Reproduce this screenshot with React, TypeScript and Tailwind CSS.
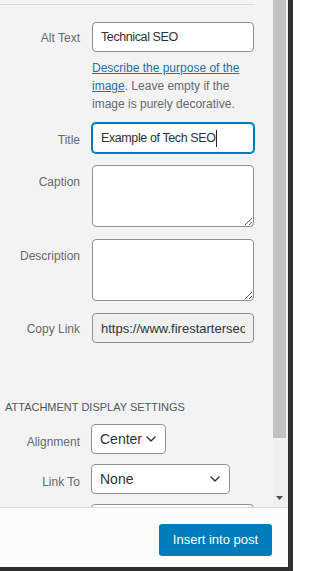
import React from "react"

const font = { fontFamily: '"Liberation Sans", Arial, sans-serif' }

function Label({ children, top = "pt-[7px]" }: { children: React.ReactNode; top?: string }) {
  return (
    <div className={`w-[80px] shrink-0 text-right text-[12px] leading-[18px] text-[#646970] ${top}`}>
      {children}
    </div>
  )
}

function Chevron() {
  return (
    <svg width="10" height="6" viewBox="0 0 10 6" fill="none" className="shrink-0">
      <path d="M1 1l4 4 4-4" stroke="#2c3338" strokeWidth="1.4" strokeLinecap="round" strokeLinejoin="round" />
    </svg>
  )
}

function Select({ value, width }: { value?: string; width: string }) {
  return (
    <div
      className={`${width} h-[30px] flex items-center justify-between pl-[8px] pr-[9px] bg-white border border-[#8c8f94] rounded-[4px] text-[14px] text-[#2c3338]`}
    >
      <span>{value}</span>
      <Chevron />
    </div>
  )
}

const field =
  "ml-[12px] w-[162px] h-[30px] px-[8px] border rounded-[4px] text-[#2c3338] outline-none"

export default function App() {
  return (
    <div className="w-[293px] h-[571px] bg-[#2f2f2f] overflow-hidden" style={font}>
      <div className="w-[288px] h-[567px] flex flex-col">
        {/* scroll area */}
        <div className="h-[507px] flex overflow-hidden">
          <div className="w-[273px] bg-[#f3f3f3] overflow-hidden">
            <div className="mt-[4px] h-px w-[255px] bg-[#dcdcde]" />

            <div className="mt-[17px] flex">
              <Label>Alt Text</Label>
              <input
                readOnly
                value="Technical SEO"
                className={`${field} bg-white border-[#8c8f94] text-[12.5px] tracking-[-0.4px]`}
              />
            </div>

            <p className="mt-[7px] ml-[92px] w-[170px] text-[12px] leading-[18px] text-[#646970]">
              <a className="text-[#2271b1] underline">
                Describe the purpose of the
                <br />
                image
              </a>
              . Leave empty if the
              <br />
              image is purely decorative.
            </p>

            <div className="mt-[10px] flex">
              <Label top="pt-[8px]">Title</Label>
              <div
                className={`${field} flex items-center bg-white border-[#007cba] shadow-[0_0_0_1px_#007cba] text-[12.5px] tracking-[-0.4px]`}
              >
                <span>Example of Tech SEO</span>
                <span className="ml-[1px] w-px h-[17px] bg-[#1d2327]" />
              </div>
            </div>

            <div className="mt-[12px] flex">
              <Label top="pt-[8px]">Caption</Label>
              <textarea
                readOnly
                className="ml-[12px] w-[162px] h-[62px] block bg-white border border-[#8c8f94] rounded-[4px] outline-none"
              />
            </div>

            <div className="mt-[12px] flex">
              <Label top="pt-[8px]">Description</Label>
              <textarea
                readOnly
                className="ml-[12px] w-[162px] h-[62px] block bg-white border border-[#8c8f94] rounded-[4px] outline-none"
              />
            </div>

            <div className="mt-[12px] flex">
              <Label top="pt-[7px]">Copy Link</Label>
              <input
                readOnly
                value="https://www.firestarterseo.com/wp-content/uploads/technical-seo.png"
                className={`${field} bg-[#f0f0f1] border-[#8c8f94] text-[13px]`}
              />
            </div>

            <h2 className="mt-[55px] ml-[5px] text-[11px] leading-[18px] uppercase text-[#50575e]">
              Attachment Display Settings
            </h2>

            <div className="mt-[8px] flex">
              <Label top="pt-[9px]">Alignment</Label>
              <div className="ml-[11px]">
                <Select value="Center" width="w-[75px]" />
              </div>
            </div>

            <div className="mt-[10px] flex">
              <Label top="pt-[9px]">Link To</Label>
              <div className="ml-[11px]">
                <Select value="None" width="w-[139px]" />
              </div>
            </div>

            <div className="mt-[10px] flex">
              <div className="w-[80px] shrink-0" />
              <div className="ml-[11px]">
                <Select width="w-[163px]" />
              </div>
            </div>
          </div>

          {/* scrollbar */}
          <div className="w-[15px] bg-[#f0f0f0] flex flex-col">
            <div className="w-[13px] h-[438px] bg-[#c1c1c1]" />
            <div className="flex-1 flex items-end justify-center pb-[7px] pr-[2px]">
              <svg width="7" height="4" viewBox="0 0 7 4">
                <path d="M0 0h7L3.5 4z" fill="#505050" />
              </svg>
            </div>
          </div>
        </div>

        {/* footer */}
        <div className="flex-1 bg-[#fcfcfc] border-t border-[#dcdcde] flex justify-end items-start pt-[16px] pr-[16px]">
          <button className="h-[32px] w-[113px] rounded-[3px] bg-[#007cba] text-white text-[13px]">
            Insert into post
          </button>
        </div>
      </div>
    </div>
  )
}
